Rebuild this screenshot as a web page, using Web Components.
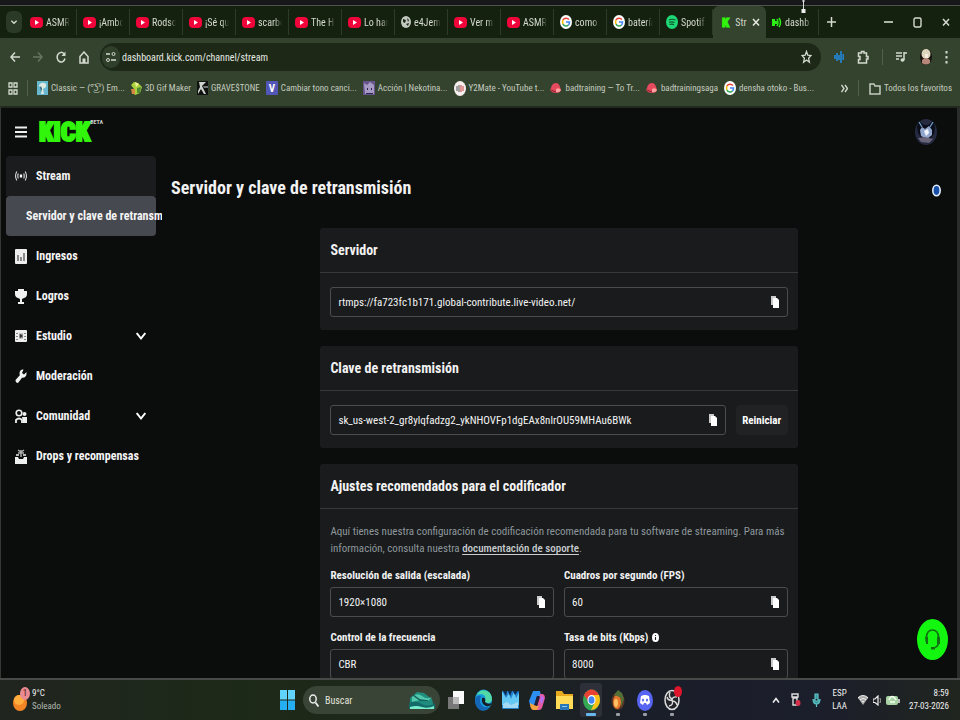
<!DOCTYPE html>
<html lang="es">
<head>
<meta charset="utf-8">
<title>Servidor y clave de retransmisión</title>
<style>
    html, body {
        margin:0;
        height:100%;
    }
    body {
        font-family:"Roboto Condensed", Roboto, "Liberation Sans", sans-serif;
        font-size:12px;
        color:#f2f2f2;
        background:#0b0c0c;
        overflow:hidden;
    }
</style>
</head>
<body>
<desktop-screen></desktop-screen>

<script>
// width, height, viewBox, content
const icons = {
    down: [8, 8, '0 0 12 12', '<path d="M2 4l4 4 4-4" fill="none" stroke="currentColor" stroke-width="2"/>'],
    youtube: [13, 13, '0 0 13 13', '<rect y="1" width="13" height="11" rx="4" fill="#f0043a"/><path d="M5 4l4 2.5-4 2.5z" fill="#fff"/>'],
    globe: [10, 12, '0 0 10 12', '<ellipse cx="5" cy="6" rx="5" ry="6" fill="#c3c8c0"/><path d="M2 3l3 1-1 3-2-1zM6 2l2 2-1 2zM5 8l3-1-1 3z" fill="#1a2716"/>'],
    google: [12, 14, '0 0 12 14', '<ellipse cx="6" cy="7" rx="6" ry="7" fill="#fff"/><path d="M9 4.5C7 2.5 4 3 3 5" fill="none" stroke="#e94235" stroke-width="1.6"/><path d="M3 5Q2 7 3 9" fill="none" stroke="#fabb05" stroke-width="1.6"/><path d="M3 9C4 11.500 7 11.500 8.500 10" fill="none" stroke="#34a853" stroke-width="1.600"/><path d="M6 7h3.500q0 2-1 3" fill="none" stroke="#4285f4" stroke-width="1.600"/>'],
    spotify: [12, 14, '0 0 12 14', '<ellipse cx="6" cy="7" rx="6" ry="7" fill="#1ed775"/><path d="M3 5q3-1.500 6.500 0M3 7.300q3-1 5.500.200M3.500 9.500q2.500-.800 4.500.200" fill="none" stroke="#10562f" stroke-width="1.200"/>'],
    signal: [10, 11, '0 0 10 11', '<path d="M0 2h3v7H0zM3 4h2v3H3z" fill="#2df016"/><path d="M5 2q2 3.500 0 7M7 1q3 4.500 0 9" fill="none" stroke="#2df016" stroke-width="1.500"/>'],
    cross: [8, 10, '0 0 8 10', '<path d="M1 2l6 6.500M7 2L1 8.500" fill="none" stroke="currentColor" stroke-width="1.500"/>'],
    plus: [9, 10, '0 0 9 10', '<path d="M4.500 0v10M0 5h9" fill="none" stroke="currentColor" stroke-width="1.500"/>'],
    minus: [9, 10, '0 0 9 10', '<path d="M0 5h9" fill="none" stroke="currentColor" stroke-width="1.600"/>'],
    box: [9, 11, '0 0 9 11', '<rect x="1" y="1" width="7" height="9" rx="1.500" fill="none" stroke="currentColor" stroke-width="1.400"/>'],
    back: [10, 12, '0 0 10 12', '<path d="M10 6H1M5 1.500L1 6l4 4.500" fill="none" stroke="currentColor" stroke-width="1.500"/>'],
    forward: [10, 12, '0 0 10 12', '<path d="M0 6h9M5 1.500L9 6l-4 4.500" fill="none" stroke="currentColor" stroke-width="1.500"/>'],
    reload: [10, 12, '0 0 10 12', '<path d="M9 7.500A4 4.800 0 1 1 8 2.800" fill="none" stroke="currentColor" stroke-width="1.500"/><path d="M9.500.500v4.500H5.500z" fill="currentColor"/>'],
    home: [10, 13, '0 0 10 13', '<path d="M1 5.500l4-4.500 4 4.500V12H1z" fill="none" stroke="currentColor" stroke-width="1.500"/><path d="M3.500 7.500h3V12h-3z" fill="currentColor"/>'],
    tune: [10, 12, '0 0 10 12', '<path d="M0 3h4M5 9h5" stroke="currentColor" stroke-width="1.700"/><circle cx="7.500" cy="3" r="1.500" fill="none" stroke="currentColor"/><circle cx="2" cy="9" r="1.500" fill="none" stroke="currentColor"/>'],
    star: [11, 14, '0 0 11 14', '<path d="M5.500 1.500l1.300 3.700 3.200.3-2.400 2.800.8 4-2.900-2.200-2.900 2.200.8-4L1 5.500l3.200-.3z" fill="none" stroke="currentColor" stroke-width="1.300"/>'],
    waves: [10, 14, '0 0 10 14', '<path d="M1 5v4M3 3v8M5 5v5M7 1v12M9.300 4v6" stroke="#2383cf" stroke-width="1.700"/>'],
    puzzle: [12, 14, '0 0 12 14', '<path d="M1.500 3H4.500V1.500H7V3h2.500v3.500H11v2.500H9.500V13h-8V9.500H3V6.500H1.500z" fill="none" stroke="currentColor" stroke-width="1.500"/>'],
    media: [11, 13, '0 0 11 13', '<path d="M0 2h6M0 5h6M0 8h3M8 1v8M8 2h3" stroke="currentColor" stroke-width="1.500"/><ellipse cx="6.500" cy="9" rx="2" ry="1.800" fill="currentColor"/>'],
    person: [12, 16, '0 0 12 16', '<ellipse cx="6" cy="8" rx="6" ry="8" fill="#181411"/><ellipse cx="6" cy="5" rx="4.500" ry="5" fill="#ddd5bb"/><path d="M2 11q4-4 8 0v3q-4 3-8 0z" fill="#b78678"/><path d="M5 5h3v4H5z" fill="#f8ece1"/>'],
    dots: [3, 13, '0 0 3 13', '<path d="M.5 0h2v2.500h-2zM.5 5h2v2.500h-2zM.5 10h2v2.500h-2z" fill="currentColor"/>'],
    grid: [10, 13, '0 0 10 13', '<path d="M1 1h3v4H1zM6 1h3v4H6zM1 8h3v4H1zM6 8h3v4H6z" fill="none" stroke="currentColor" stroke-width="1.300"/>'],
    classic: [11, 14, '0 0 11 14', '<rect width="11" height="14" fill="#67b8cf"/><path d="M2 4q3-4 7-1v3L6 8l1 5H4L5 7 2 5z" fill="#dfe8e1"/><path d="M3 5l2 2-1 4z" fill="#386574"/>'],
    gif: [11, 14, '0 0 11 14', '<path d="M3 1l4 1 4 4-2 6-5 2-3-3 2-3-3-4z" fill="#a8d33f"/><path d="M4 1l4 2-3 3z" fill="#f5f39a"/><path d="M0 8h4v5H1z" fill="#d78642"/><path d="M6 7l4-1-1 6H6z" fill="#508b32"/>'],
    grave: [11, 14, '0 0 11 14', '<rect width="11" height="14" fill="#10120f"/><path d="M2 1h7L5 5l4 8H7L4 8l-3 5V10l2-4z" fill="#cfd3ce"/><path d="M6 5h5v2H7z" fill="#777"/>'],
    letter: [12, 14, '0 0 12 14', '<rect width="12" height="14" rx="1" fill="#5256b6"/><text x="6" y="11" text-anchor="middle" font-size="11" font-weight="700" fill="#fff">V</text>'],
    anime: [12, 14, '0 0 12 14', '<rect width="12" height="14" fill="#66538b"/><path d="M1 2l3 2 3-3 4 3v9H2z" fill="#a79bc6"/><path d="M4 7h1v2H4zM8 7h1v2H8zM3 12h7v1H3z" fill="#2e2450"/>'],
    y2mate: [12, 15, '0 0 12 15', '<ellipse cx="6" cy="7.500" rx="6" ry="7.500" fill="#f5eeec"/><path d="M3 5v5M5 4v7" stroke="#6a6a6a" stroke-width="1.200"/><path d="M7 4v7M9 5v5" stroke="#d25d5d" stroke-width="1.200"/>'],
    cap: [12, 12, '0 0 12 12', '<path d="M1 6q1-5 5-5 3 0 4 4l1 3q-1 3-5 3-4 0-6-3z" fill="#e54a5e"/><path d="M6 7q3-2 5 1-1 3-5 2z" fill="#ff9f9d"/><path d="M1 8l5 2" stroke="#8c1d31"/>'],
    more: [7, 9, '0 0 7 9', '<path d="M.5 1l2.500 3.500L.5 8M4 1l2.500 3.500L4 8" fill="none" stroke="currentColor" stroke-width="1.300"/>'],
    folder: [12, 13, '0 0 12 13', '<path d="M1 2h4l1 2h5v8H1z" fill="none" stroke="currentColor" stroke-width="1.500"/>'],
    menu: [12, 12, '0 0 12 12', '<path d="M0 1.500h12M0 6h12M0 10.500h12" stroke="#eee" stroke-width="1.800"/>'],
    avatar: [22, 26, '0 0 22 26', '<ellipse cx="11" cy="13" rx="11" ry="13" fill="#252a40"/><path d="M2 8L4 2l5 4h4l5-4 2 6-1 7-4 5H7L3 14z" fill="#0b0e1a"/><path d="M5 11l2-3 3 2 4-3 3 4v5l-5 4-6-3z" fill="#92a6cc"/><path d="M9 12l4-2 1 4-3 3z" fill="#f0f4fc"/><path d="M3 19l7-1 8 2-4 4-8-1z" fill="#6a6478"/><path d="M4 3l3 5M18 3l-3 5" stroke="#6d9cc6" stroke-width="1.300"/>'],
    live: [12, 12, '0 0 12 12', '<path d="M3.300 3.500q-1 2.500 0 5M8.700 3.500q1 2.500 0 5M1.800 1.500Q-.7 6 1.800 10.500M10.200 1.500q2.500 4.500 0 9" fill="none" stroke="#ddd" stroke-width="1.100"/><ellipse cx="6" cy="6" rx="1.300" ry="1.800" fill="#fff"/>'],
    chart: [12, 15, '0 0 12 15', '<rect width="12" height="15" rx="1" fill="#eee"/><path d="M3 6v6M6 8v4M9 4v8" stroke="#555" stroke-width="1.300"/>'],
    trophy: [12, 15, '0 0 12 15', '<path d="M3 0h6v2h3v3q0 3-3 4l-2 1v3h2v2H3v-2h2v-3L3 9Q0 8 0 5V2h3z" fill="#f1f1f1"/>'],
    studio: [12, 12, '0 0 12 12', '<rect width="12" height="12" rx="1" fill="#eee"/><path d="M2 3v1M2 6v1M2 9v1M10 3v1M10 6v1M10 9v1" stroke="#444" stroke-width="1.200"/><path d="M4 3.500h4v5H4z" fill="#999"/><path d="M5 4l3 2-3 2z" fill="#333"/>'],
    wrench: [12, 15, '0 0 12 15', '<path d="M11.500 3L9 5.500 7 4 8.500.500Q5 0 4.500 4l.3 2.300L.5 11q0 3 2.500 3l4-5.200Q12 9 11.500 3z" fill="#f1f1f1"/>'],
    people: [12, 15, '0 0 12 15', '<circle cx="4" cy="4" r="2.800" fill="none" stroke="#eee" stroke-width="1.600"/><path d="M1 14v-3q3-3 6 0v3" fill="none" stroke="#eee" stroke-width="1.800"/><circle cx="9.500" cy="5" r="2" fill="#eee"/><path d="M7 8h5v6H8z" fill="#eee"/>'],
    drops: [12, 15, '0 0 12 15', '<path d="M6 1v7M3 4h6M3 1l3 2 3-2" fill="none" stroke="#aaa" stroke-width="1.500"/><path d="M0 8h3l1 2h4l1-2h3v7H0z" fill="#eee"/><path d="M1 6h3M8 6h3" stroke="#eee" stroke-width="1.500"/>'],
    chevron: [10, 10, '0 0 10 10', '<path d="M.7 2L5 7.500 9.300 2" fill="none" stroke="#fff" stroke-width="2"/>'],
    copy: [8, 12, '0 0 8 12', '<path d="M0 0h5v2H2v7H0z" fill="#ccc"/><path d="M2 2h4l2 2v8H2z" fill="#fff"/>'],
    info: [7, 9, '0 0 7 9', '<ellipse cx="3.500" cy="4.500" rx="3.500" ry="4.500" fill="#fff"/><path d="M3.500 4v3M3.500 2v1" stroke="#222" stroke-width="1.100"/>'],
    help: [31, 41, '0 0 31 41', '<ellipse cx="15.500" cy="20.500" rx="15.500" ry="20.500" fill="#13f710"/><path d="M9.500 22v-4Q10 11 15.500 11T21.500 18v6q-.5 4-5 5" fill="none" stroke="#136d13" stroke-width="1.700"/><path d="M8 18h3v7H9zM20 18h3v7h-3zM14 28h4v2.500h-4z" fill="#136d13"/>'],
    weather: [16, 24, '0 0 16 24', '<ellipse cx="7" cy="15" rx="7" ry="8" fill="#f38426"/><ellipse cx="6" cy="12" rx="5" ry="5" fill="#ffad3c"/>'],
    windows: [15, 20, '0 0 15 20', '<path d="M0 0h7v9.500H0zM8 0h7v9.500H8z" fill="#61d4fb"/><path d="M0 10.500h7V20H0zM8 10.500h7V20H8z" fill="#25aef0"/>'],
    search: [10, 13, '0 0 10 13', '<ellipse cx="4" cy="5" rx="3.200" ry="4" fill="none" stroke="#eee" stroke-width="1.500"/><path d="M6.500 8.500l3 4" stroke="#eee" stroke-width="1.800"/>'],
    scene: [26, 20, '0 0 26 20', '<path d="M1 8l7-6 7 1 8 6 2 9H1z" fill="#1e8d7e"/><path d="M3 7q5-5 10-1T23 7l-5 5-7-2-8 2z" fill="#52c7a9"/><path d="M0 13q7-3 13 1t13-1v6H0z" fill="#126b68"/><path d="M1 17q6-2 12 0t12-1v3H1z" fill="#78edcb"/><path d="M4 5l7 5 8 1" fill="none" stroke="#125f60" stroke-width="1.500"/>'],
    tasks: [16, 19, '0 0 16 19', '<rect x="5" width="11" height="13" fill="#fafafa"/><rect y="6" width="11" height="12" fill="#777"/><path d="M5 6h6v7H5z" fill="#bbb"/>'],
    edge: [17, 22, '0 0 17 22', '<ellipse cx="8.500" cy="11" rx="8.500" ry="10.500" fill="#159cdc"/><path d="M1 7Q5-1 12 2q5 2 5 9-2 5-7 2 2-7-4-8Q2 5 1 7z" fill="#51d9a8"/><path d="M0 11q1-5 6-4-3 7 3 11 4 1 6-1-4 6-10 4Q0 18 0 11z" fill="#1467b7"/><path d="M7 9q4-1 3 4 3 3 7 1-2 4-6 3-5-2-4-8z" fill="#181c25"/>'],
    gallery: [17, 18, '0 0 17 18', '<rect width="17" height="18" rx="1" fill="#2383d0"/><path d="M0 0l4 7 3-5 2 6 3-7 2 6 3-5v12H0z" fill="#64c8f4"/><path d="M1 0h4L4 5zM6 0h4L8 5zM11 0h5l-3 4z" fill="#0d2a50"/><path d="M1 13l4-2 4 3 7-3v6H1z" fill="#a4daf5"/>'],
    copilot: [16, 21, '0 0 16 21', '<path d="M4 1h7l1 5H8L5 17 1 15l-1-4z" fill="#2e8ff2"/><path d="M11 4h3q2 1 2 4l-3 10q-1 2-3 2H5l3-3z" fill="#e65b9d"/><path d="M1 13l4 2 5 1-2 4H4q-3-1-3-7z" fill="#f5a341"/><path d="M8 6l3 1-3 9-3-1z" fill="#251e3a"/><path d="M12 5l3 3-2 6-2-2z" fill="#b56ef4"/>'],
    files: [17, 20, '0 0 17 20', '<path d="M0 1h6l2 3h9v15H0z" fill="#e9a91f"/><path d="M0 6h17v13H0z" fill="#ffdb58"/><path d="M4 14h9v6H4z" fill="#2877bb"/><path d="M6 16h5v1H6z" fill="#8dc8f0"/>'],
    chrome: [17, 22, '0 0 17 22', '<ellipse cx="8.500" cy="11" rx="8.500" ry="10.500" fill="#34a853"/><path d="M1 6Q4 .5 8.500.500T16 6H8L5 12z" fill="#e94235"/><path d="M8 6h8q3 9-4 14l-4 1 4-8z" fill="#fbc116"/><ellipse cx="8.500" cy="11" rx="4" ry="5" fill="#fff"/><ellipse cx="8.500" cy="11" rx="3" ry="3.800" fill="#4285f4"/>'],
    fruit: [14, 22, '0 0 14 22', '<ellipse cx="7" cy="12" rx="6.500" ry="9" fill="#5b3523"/><ellipse cx="6" cy="13" rx="4" ry="7" fill="#e5782e"/><ellipse cx="5" cy="14" rx="2" ry="4" fill="#ffc163"/><path d="M7 1l4 3 2 6-3 8V9L6 7 3 6z" fill="#526f35"/>'],
    discord: [16, 21, '0 0 16 21', '<ellipse cx="8" cy="10.500" rx="8" ry="10.500" fill="#5865f2"/><path d="M4 6l3-1h2l3 1 1 7-3 2-1-2H7l-1 2-3-2z" fill="#fff"/><ellipse cx="6" cy="10" rx="1" ry="1.500" fill="#5865f2"/><ellipse cx="10" cy="10" rx="1" ry="1.500" fill="#5865f2"/>'],
    obs: [16, 22, '0 0 16 22', '<ellipse cx="8" cy="11" rx="7" ry="9.500" fill="#222329" stroke="#ddd" stroke-width="1.500"/><path d="M6 3q-2 5 2 7M13 8q-5-1-5 4M5 17q5-1 3-6M3 8q1 4 5 3M13 16q-1-4-5-4" fill="none" stroke="#ddd" stroke-width="1.400"/>'],
    up: [8, 8, '0 0 8 8', '<path d="M1 6.500l3-4 3 4" fill="none" stroke="#eee" stroke-width="1.600"/>'],
    usb: [10, 14, '0 0 10 14', '<path d="M1 1h6v3H1zM2 5h4v7H2z" fill="none" stroke="#ddd" stroke-width="1.400"/><ellipse cx="7" cy="10" rx="2.500" ry="3" fill="#d6304c"/>'],
    mic: [9, 14, '0 0 9 14', '<path d="M3 1h3v7H3zM1 6q0 5 3.500 5T8 6M4.500 11v3" fill="#38979c" stroke="#61c2c4" stroke-width="1.200"/>'],
    wifi: [10, 12, '0 0 10 12', '<path d="M0 4q5-5 10 0L5 11z" fill="#aaa"/><path d="M0 4q5-5 10 0M2 6q3-3 6 0M4 8q1-1 2 0" fill="none" stroke="#eee" stroke-width="1.100"/>'],
    sound: [8, 11, '0 0 8 11', '<path d="M0 4h2l3-3v9L2 7.500H0z" fill="none" stroke="#eee" stroke-width="1.200"/><path d="M7 3q1 2.500 0 5" fill="none" stroke="#aaa"/>'],
    battery: [14, 12, '0 0 14 12', '<rect y="2" width="12" height="9" rx="2" fill="#a9d3a5"/><path d="M12 5h2v4h-2z" fill="#bbb"/><path d="M3 6q3-7 7 0M4 8h5" fill="none" stroke="#f3fff0" stroke-width="1.500"/>'],
    cursor: [7, 14, '0 0 7 14', '<path d="M3.500 0v11M2 1h3" stroke="#ddd" stroke-width="1"/><path d="M1.500 9h4v4h-4z" fill="#eee"/>'],
    ring: [9, 13, '0 0 9 13', '<ellipse cx="4.500" cy="6.500" rx="3.700" ry="5.200" fill="#164ea8" stroke="#e1edfb" stroke-width="1.600"/>']
};

class UiIcon extends HTMLElement {
    constructor() {
        super();
        this.attachShadow({mode:'open'});
    }
    connectedCallback() {
        const [w, h, box, art] = icons[this.getAttribute('name')];
        this.shadowRoot.innerHTML = `
        <style>
            :host { display:inline-flex; flex:none; }
            svg { display:block; }
        </style>
        <svg width="${w}" height="${h}" viewBox="${box}" aria-hidden="true">${art}</svg>`;
    }
}
customElements.define('ui-icon', UiIcon);

class KickMark extends HTMLElement {
    constructor() {
        super();
        this.attachShadow({mode:'open'});
        this.shadowRoot.innerHTML = `
        <style>
            :host { display:inline-block; flex:none; color:#31f50b; font-weight:900; -webkit-text-stroke:2px currentColor; }
        </style>
        <slot></slot>`;
    }
}
customElements.define('kick-mark', KickMark);

class BrowserTab extends HTMLElement {
    constructor() {
        super();
        this.attachShadow({mode:'open'});
        this.shadowRoot.innerHTML = `
        <style>
            :host {
                display:flex;
                flex:0 1 53px;
                min-width:0;
                height:26px;
                box-sizing:border-box;
                align-items:center;
                padding:0 6px;
                gap:3px;
                color:#d3d9ce;
                font-size:10px;
                border-right:1px solid #2c3c28;
            }
            :host([active]) {
                height:32px;
                background:#33432d;
                border-radius:6px 6px 0 0;
                border-right:0;
                padding-left:9px;
            }
            span {
                flex:1;
                min-width:0;
                overflow:hidden;
                white-space:nowrap;
                -webkit-mask-image:linear-gradient(90deg, #000 70%, transparent);
            }
            :host([active]) span { -webkit-mask-image:none; padding-left:3px; }
            button { border:0; padding:0; background:none; color:#e6eae2; display:flex; }
        </style>
        <slot name="icon"></slot>
        <span><slot></slot></span>`;
    }
    connectedCallback() {
        if (this.hasAttribute('active')) {
            this.shadowRoot.innerHTML += '<button aria-label="Cerrar pestaña"><ui-icon name="cross"></ui-icon></button>';
        }
    }
}
customElements.define('browser-tab', BrowserTab);

class BookmarkLink extends HTMLElement {
    constructor() {
        super();
        this.attachShadow({mode:'open'});
        this.shadowRoot.innerHTML = `
        <style>
            :host { display:block; flex:none; }
            a {
                display:flex;
                align-items:center;
                gap:3px;
                color:#c6ccc0;
                font-size:9px;
                text-decoration:none;
                white-space:nowrap;
            }
        </style>
        <a href="#"><ui-icon name="${this.getAttribute('icon')}"></ui-icon><slot></slot></a>`;
    }
}
customElements.define('bookmark-link', BookmarkLink);

class BrowserChrome extends HTMLElement {
    constructor() {
        super();
        this.attachShadow({mode:'open'});
        this.shadowRoot.innerHTML = `
        <style>
            :host { display:block; color:#d4dacf; background:#33432d; border-top:1px solid #51534f; }
            button { border:0; padding:0; margin:0; background:none; color:inherit; display:flex; align-items:center; justify-content:center; }
            .tabs { display:flex; align-items:center; height:32px; background:#15210f; padding-left:6px; }
            .tabs > .search { width:16px; height:22px; border-radius:6px; background:#2b3a27; margin-right:2px; }
            .tabs > .new { width:24px; }
            kick-mark { font-size:13px; -webkit-text-stroke-width:1px; }
            .system { display:flex; margin-left:auto; gap:20px; padding-right:10px; }
            .tools { display:flex; align-items:center; height:38px; gap:13px; padding:0 12px 0 10px; }
            .tools .off { color:#68745f; }
            .address {
                flex:1;
                display:flex;
                align-items:center;
                height:28px;
                border-radius:14px;
                background:#1d2817;
                padding:0 9px 0 2px;
                gap:2px;
                margin-left:-2px;
            }
            .address .site { width:18px; height:22px; border-radius:9px; background:#303f2a; }
            .address input {
                flex:1;
                min-width:0;
                border:0;
                padding:0;
                outline:0;
                background:none;
                color:#e6eae2;
                font:10px "Roboto Condensed", Roboto, sans-serif;
            }
            .bar { width:1px; height:16px; background:#52604c; }
            .marks { display:flex; align-items:center; height:24px; gap:6px; padding:0 8px 6px; }
            .marks > .bar { margin:0 3px; }
            .marks .rest { display:flex; align-items:center; gap:10px; margin-left:auto; }
        </style>
        <div class="tabs">
            <button class="search" aria-label="Buscar pestañas"><ui-icon name="down"></ui-icon></button>
            <browser-tab><ui-icon slot="icon" name="youtube"></ui-icon>ASMR</browser-tab>
            <browser-tab><ui-icon slot="icon" name="youtube"></ui-icon>¡Ambo</browser-tab>
            <browser-tab><ui-icon slot="icon" name="youtube"></ui-icon>Rodso</browser-tab>
            <browser-tab><ui-icon slot="icon" name="youtube"></ui-icon>¡Sé qu</browser-tab>
            <browser-tab><ui-icon slot="icon" name="youtube"></ui-icon>scarbo</browser-tab>
            <browser-tab><ui-icon slot="icon" name="youtube"></ui-icon>The Hi</browser-tab>
            <browser-tab><ui-icon slot="icon" name="youtube"></ui-icon>Lo har</browser-tab>
            <browser-tab><ui-icon slot="icon" name="globe"></ui-icon>e4Jem</browser-tab>
            <browser-tab><ui-icon slot="icon" name="youtube"></ui-icon>Ver m</browser-tab>
            <browser-tab><ui-icon slot="icon" name="youtube"></ui-icon>ASMR</browser-tab>
            <browser-tab><ui-icon slot="icon" name="google"></ui-icon>como</browser-tab>
            <browser-tab><ui-icon slot="icon" name="google"></ui-icon>batería</browser-tab>
            <browser-tab><ui-icon slot="icon" name="spotify"></ui-icon>Spotif</browser-tab>
            <browser-tab active><kick-mark slot="icon">K</kick-mark>Str</browser-tab>
            <browser-tab><ui-icon slot="icon" name="signal"></ui-icon>dashb</browser-tab>
            <button class="new" aria-label="Nueva pestaña"><ui-icon name="plus"></ui-icon></button>
            <div class="system">
                <button aria-label="Minimizar"><ui-icon name="minus"></ui-icon></button>
                <button aria-label="Maximizar"><ui-icon name="box"></ui-icon></button>
                <button aria-label="Cerrar"><ui-icon name="cross"></ui-icon></button>
            </div>
        </div>
        <div class="tools">
            <button aria-label="Atrás"><ui-icon name="back"></ui-icon></button>
            <button class="off" aria-label="Adelante"><ui-icon name="forward"></ui-icon></button>
            <button aria-label="Recargar"><ui-icon name="reload"></ui-icon></button>
            <button aria-label="Inicio"><ui-icon name="home"></ui-icon></button>
            <div class="address">
                <button class="site" aria-label="Información del sitio"><ui-icon name="tune"></ui-icon></button>
                <input type="text" aria-label="Dirección" value="dashboard.kick.com/channel/stream">
                <button aria-label="Favorito"><ui-icon name="star"></ui-icon></button>
            </div>
            <button aria-label="Audio"><ui-icon name="waves"></ui-icon></button>
            <button aria-label="Extensiones"><ui-icon name="puzzle"></ui-icon></button>
            <div class="bar"></div>
            <button aria-label="Multimedia"><ui-icon name="media"></ui-icon></button>
            <button aria-label="Perfil"><ui-icon name="person"></ui-icon></button>
            <button aria-label="Menú"><ui-icon name="dots"></ui-icon></button>
        </div>
        <div class="marks">
            <button aria-label="Aplicaciones"><ui-icon name="grid"></ui-icon></button>
            <div class="bar"></div>
            <bookmark-link icon="classic">Classic — (͡°͜ʖ͡°) Em...</bookmark-link>
            <bookmark-link icon="gif">3D Gif Maker</bookmark-link>
            <bookmark-link icon="grave">GRAVE$TONE</bookmark-link>
            <bookmark-link icon="letter">Cambiar tono canci...</bookmark-link>
            <bookmark-link icon="anime">Acción | Nekotina...</bookmark-link>
            <bookmark-link icon="y2mate">Y2Mate - YouTube t...</bookmark-link>
            <bookmark-link icon="cap">badtraining — To Tr...</bookmark-link>
            <bookmark-link icon="cap">badtrainingsaga</bookmark-link>
            <bookmark-link icon="google">densha otoko - Bus...</bookmark-link>
            <div class="rest">
                <button aria-label="Más favoritos"><ui-icon name="more"></ui-icon></button>
                <div class="bar"></div>
                <bookmark-link icon="folder">Todos los favoritos</bookmark-link>
            </div>
        </div>`;
    }
}
customElements.define('browser-chrome', BrowserChrome);

class NavItem extends HTMLElement {
    constructor() {
        super();
        this.attachShadow({mode:'open'});
    }
    connectedCallback() {
        const icon = this.getAttribute('icon');
        this.shadowRoot.innerHTML = `
        <style>
            :host { display:block; }
            a {
                display:flex;
                align-items:center;
                box-sizing:border-box;
                height:40px;
                padding:0 10px 0 9px;
                gap:9px;
                color:#f4f4f4;
                font-size:12px;
                font-weight:700;
                text-decoration:none;
                white-space:nowrap;
            }
            :host([open]) a { background:#1b1c1d; border-radius:4px 4px 0 0; }
            :host([current]) a { background:#474950; border-radius:4px; padding-left:20px; }
            span { flex:1; }
        </style>
        <a href="#">
            ${icon ? `<ui-icon name="${icon}"></ui-icon>` : ''}
            <span><slot></slot></span>
            ${this.hasAttribute('expandable') ? '<ui-icon name="chevron"></ui-icon>' : ''}
        </a>`;
    }
}
customElements.define('nav-item', NavItem);

class CopyField extends HTMLElement {
    constructor() {
        super();
        this.attachShadow({mode:'open'});
    }
    connectedCallback() {
        const label = this.getAttribute('label');
        this.shadowRoot.innerHTML = `
        <style>
            :host { display:block; flex:1; min-width:0; }
            label {
                display:flex;
                align-items:center;
                gap:4px;
                height:24px;
                font-size:11px;
                font-weight:700;
            }
            :host([bare]) label { display:none; }
            .box {
                display:flex;
                align-items:center;
                height:30px;
                box-sizing:border-box;
                border:1px solid #4a4c4d;
                border-radius:3px;
                padding:0 8px 0 7px;
            }
            input {
                flex:1;
                min-width:0;
                border:0;
                padding:0;
                outline:0;
                background:none;
                color:#f4f4f4;
                font:11px "Roboto Condensed", Roboto, sans-serif;
            }
            button { border:0; padding:0; background:none; display:flex; }
        </style>
        <label for="value">${label}${this.hasAttribute('info') ? '<ui-icon name="info"></ui-icon>' : ''}</label>
        <div class="box">
            <input id="value" type="text" readonly aria-label="${label}" value="${this.getAttribute('value')}">
            ${this.hasAttribute('nocopy') ? '' : '<button aria-label="Copiar"><ui-icon name="copy"></ui-icon></button>'}
        </div>`;
    }
}
customElements.define('copy-field', CopyField);

class SettingsCard extends HTMLElement {
    constructor() {
        super();
        this.attachShadow({mode:'open'});
        this.shadowRoot.innerHTML = `
        <style>
            :host { display:block; background:#191b1c; border-radius:3px; }
            header { display:flex; align-items:center; height:44px; padding:0 10px; border-bottom:1px solid #37393a; }
            .body { padding:14px 10px 13px; }
            ::slotted(h2) { margin:0; font-size:14px; font-weight:700; }
        </style>
        <header><slot name="title"></slot></header>
        <div class="body"><slot></slot></div>`;
    }
}
customElements.define('settings-card', SettingsCard);

class KickDashboard extends HTMLElement {
    constructor() {
        super();
        this.attachShadow({mode:'open'});
        this.shadowRoot.innerHTML = `
        <style>
            :host {
                display:flex;
                flex-direction:column;
                position:relative;
                overflow:hidden;
                background:#0b0c0c;
                border-right:3px solid #2a2b2b;
                border-left:1px solid #343832;
            }
            .top { display:flex; align-items:center; height:48px; padding:0 20px 0 14px; flex:none; }
            .top button { border:0; padding:0; background:none; display:flex; }
            .logo { display:flex; align-items:flex-start; margin-left:12px; }
            .logo kick-mark { font-size:26px; line-height:28px; }
            .logo small { font-size:6px; line-height:8px; font-weight:700; color:#ccc; }
            .top .me { margin-left:auto; }
            .columns { display:flex; flex:1; min-height:0; }
            nav { flex:none; width:156px; padding-left:5px; overflow:hidden; }
            nav nav-item { width:150px; }
            main { flex:1; min-width:0; padding:0 10px 0 9px; }
            h1 { margin:16px 0 24px; font-size:18px; line-height:32px; font-weight:700; }
            .cards { display:flex; flex-direction:column; gap:16px; width:61.5%; margin:0 auto; }
            .row { display:flex; gap:10px; }
            .reset {
                border:0;
                border-radius:3px;
                width:52px;
                background:#202223;
                color:#fff;
                font:700 11px "Roboto Condensed", Roboto, sans-serif;
                padding:0;
            }
            p { margin:0 0 6px; font-size:11px; line-height:17px; color:#8e979c; }
            p a { color:#c9ced1; font-weight:500; text-underline-offset:2px; }
            .grid { display:grid; grid-template-columns:1fr 1fr; gap:8px 10px; }
            .ring { position:absolute; top:76px; right:16px; }
            .help { position:absolute; right:9px; bottom:15px; border:0; padding:0; background:none; }
        </style>
        <div class="top">
            <button aria-label="Menú"><ui-icon name="menu"></ui-icon></button>
            <div class="logo"><kick-mark>KICK</kick-mark><small>BETA</small></div>
            <button class="me" aria-label="Cuenta"><ui-icon name="avatar"></ui-icon></button>
        </div>
        <div class="columns">
            <nav>
                <nav-item icon="live" open>Stream</nav-item>
                <nav-item current>Servidor y clave de retransmisión</nav-item>
                <nav-item icon="chart">Ingresos</nav-item>
                <nav-item icon="trophy">Logros</nav-item>
                <nav-item icon="studio" expandable>Estudio</nav-item>
                <nav-item icon="wrench">Moderación</nav-item>
                <nav-item icon="people" expandable>Comunidad</nav-item>
                <nav-item icon="drops">Drops y recompensas</nav-item>
            </nav>
            <main>
                <h1>Servidor y clave de retransmisión</h1>
                <div class="cards">
                    <settings-card>
                        <h2 slot="title">Servidor</h2>
                        <copy-field bare label="Servidor" value="rtmps://fa723fc1b171.global-contribute.live-video.net/"></copy-field>
                    </settings-card>
                    <settings-card>
                        <h2 slot="title">Clave de retransmisión</h2>
                        <div class="row">
                            <copy-field bare label="Clave de retransmisión" value="sk_us-west-2_gr8ylqfadzg2_ykNHOVFp1dgEAx8nlrOU59MHAu6BWk"></copy-field>
                            <button class="reset">Reiniciar</button>
                        </div>
                    </settings-card>
                    <settings-card>
                        <h2 slot="title">Ajustes recomendados para el codificador</h2>
                        <p>Aquí tienes nuestra configuración de codificación recomendada para tu software de streaming. Para más información, consulta nuestra <a href="#">documentación de soporte</a>.</p>
                        <div class="grid">
                            <copy-field label="Resolución de salida (escalada)" value="1920×1080"></copy-field>
                            <copy-field label="Cuadros por segundo (FPS)" value="60"></copy-field>
                            <copy-field nocopy label="Control de la frecuencia" value="CBR"></copy-field>
                            <copy-field info label="Tasa de bits (Kbps)" value="8000"></copy-field>
                        </div>
                    </settings-card>
                </div>
            </main>
        </div>
        <ui-icon class="ring" name="ring"></ui-icon>
        <button class="help" aria-label="Ayuda"><ui-icon name="help"></ui-icon></button>`;
    }
}
customElements.define('kick-dashboard', KickDashboard);

class TaskApp extends HTMLElement {
    constructor() {
        super();
        this.attachShadow({mode:'open'});
    }
    connectedCallback() {
        this.shadowRoot.innerHTML = `
        <style>
            :host { display:block; position:relative; flex:none; }
            button { border:0; padding:0; background:none; display:flex; align-items:center; justify-content:center; width:22px; height:34px; }
            :host([active]) button { background:#2d3038; border-radius:3px; }
            :host([running]) button::after {
                content:"";
                position:absolute;
                bottom:1px;
                width:4px;
                height:3px;
                border-radius:1px;
                background:#9a9da2;
            }
            :host([active]) button::after { width:10px; background:#65b8ec; }
            :host([alert]) button::before {
                content:"";
                position:absolute;
                top:3px;
                right:1px;
                width:8px;
                height:11px;
                border-radius:50%;
                background:#e0152b;
            }
        </style>
        <button aria-label="${this.getAttribute('label')}"><ui-icon name="${this.getAttribute('icon')}"></ui-icon></button>`;
    }
}
customElements.define('task-app', TaskApp);

class TaskBar extends HTMLElement {
    constructor() {
        super();
        this.attachShadow({mode:'open'});
        this.shadowRoot.innerHTML = `
        <style>
            :host {
                display:flex;
                align-items:center;
                box-sizing:border-box;
                height:42px;
                border-top:2px solid #484a48;
                background:linear-gradient(90deg, #20251f 0, #1d2918 25%, #1e261c 45%, #1a1e29 68%, #1b1e2b 85%, #20251f);
                font-size:9px;
                line-height:13px;
                color:#f0f0f0;
            }
            .weather { position:relative; display:flex; align-items:center; gap:3px; padding-left:13px; flex:1; }
            .weather b {
                position:absolute;
                left:20px;
                top:0;
                width:10px;
                height:13px;
                border-radius:50%;
                background:#e98b91;
                color:#4f1b20;
                font-weight:400;
                text-align:center;
            }
            .weather div div + div { color:#b2b7ae; }
            .apps { display:flex; align-items:center; gap:5px; padding-right:3px; }
            .find {
                display:flex;
                align-items:center;
                box-sizing:border-box;
                width:137px;
                height:28px;
                border-radius:14px;
                background:#3a4436;
                padding:0 5px 0 6px;
                gap:6px;
            }
            .find input { flex:1; min-width:0; border:0; padding:0; outline:0; background:none; font:10px "Roboto Condensed", Roboto, sans-serif; }
            .find input::placeholder { color:#e0e3dc; }
            .tray { display:flex; align-items:center; justify-content:flex-end; gap:11px; padding-right:11px; flex:1; text-align:center; }
            .tray .net { display:flex; align-items:center; gap:5px; }
            .tray time { text-align:right; margin-left:-2px; white-space:nowrap; }
        </style>
        <div class="weather">
            <ui-icon name="weather"></ui-icon><b>1</b>
            <div><div>9°C</div><div>Soleado</div></div>
        </div>
        <div class="apps">
            <task-app icon="windows" label="Inicio"></task-app>
            <div class="find">
                <ui-icon name="search"></ui-icon>
                <input type="text" placeholder="Buscar" aria-label="Buscar">
                <ui-icon name="scene"></ui-icon>
            </div>
            <task-app icon="tasks" label="Vista de tareas"></task-app>
            <task-app icon="edge" label="Edge"></task-app>
            <task-app icon="gallery" label="Fotos"></task-app>
            <task-app icon="copilot" label="Copilot"></task-app>
            <task-app icon="files" label="Explorador"></task-app>
            <task-app icon="chrome" label="Chrome" running active></task-app>
            <task-app icon="fruit" label="FL Studio" running></task-app>
            <task-app icon="discord" label="Discord" running></task-app>
            <task-app icon="obs" label="OBS" running alert></task-app>
        </div>
        <div class="tray">
            <ui-icon name="up"></ui-icon>
            <ui-icon name="usb"></ui-icon>
            <ui-icon name="mic"></ui-icon>
            <div>ESP<br>LAA</div>
            <div class="net"><ui-icon name="wifi"></ui-icon><ui-icon name="sound"></ui-icon><ui-icon name="battery"></ui-icon></div>
            <time datetime="2026-03-27T08:59">8:59<br>27-03-2026</time>
        </div>`;
    }
}
customElements.define('task-bar', TaskBar);

class DesktopScreen extends HTMLElement {
    constructor() {
        super();
        this.attachShadow({mode:'open'});
        this.shadowRoot.innerHTML = `
        <style>
            :host { display:flex; flex-direction:column; height:100vh; position:relative; background:#17181a; }
            browser-chrome { margin-top:5px; flex:none; }
            kick-dashboard { flex:1; min-height:0; border-top:2px solid #22291f; }
            task-bar { flex:none; }
            .cursor { position:absolute; top:0; left:83.3%; }
        </style>
        <browser-chrome></browser-chrome>
        <kick-dashboard></kick-dashboard>
        <task-bar></task-bar>
        <ui-icon class="cursor" name="cursor"></ui-icon>`;
    }
}
customElements.define('desktop-screen', DesktopScreen);
</script>
</body>
</html>
